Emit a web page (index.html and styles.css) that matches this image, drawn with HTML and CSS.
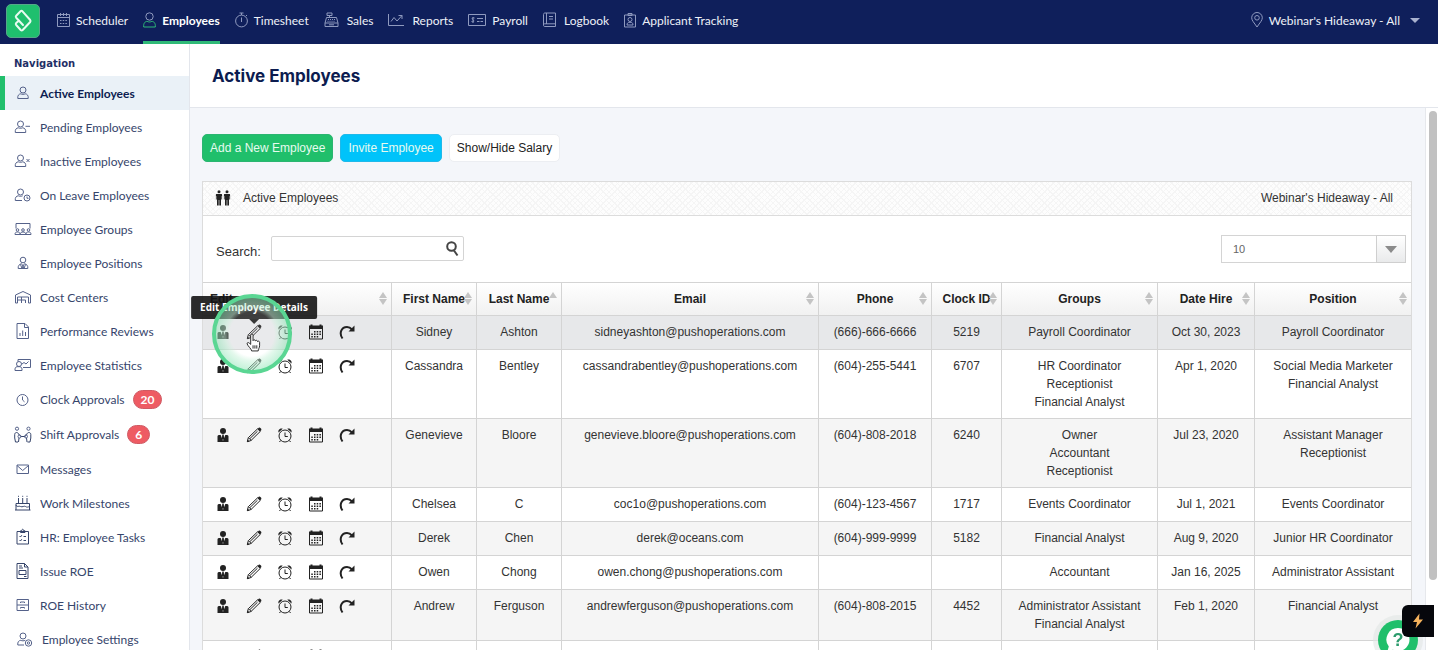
FILE: index.html
```
<!DOCTYPE html>
<html lang="en">
<head>
<meta charset="utf-8">
<title>Active Employees</title>
<link rel="stylesheet" href="styles.css">
</head>
<body>

<!-- shared icons -->
<svg class="sprite">
  <symbol id="i-user" viewBox="0 0 16 16"><circle cx="8" cy="4" r="3"/><path d="M2.500 15V9.500c0-1 .7-1.500 2-1.500h1.200L8 14 10.300 8h1.200c1.300 0 2 .5 2 1.500V15z"/><path d="M7.300 7.500h1.400l.5 4L8 13.500l-1.200-2z"/></symbol>
  <symbol id="i-pencil" viewBox="0 0 16 16"><path class="l" d="M1.300 14.700l1-4L11.600 1.800l2.700 2.600-9.300 9.100zM4 11.500l7.500-7.300M2.500 10.700l2.600 2.600"/><path d="M11.500 2l1.300-1.200c1-.8 3.300 1.300 2.400 2.500L14 4.600zM1 15l.6-2.500 1.900 1.900z"/></symbol>
  <symbol id="i-alarm" viewBox="0 0 16 16"><circle class="l" cx="8" cy="9" r="6"/><path class="l" d="M8 5.500V9.500h2.800M3.500 13.500L2.500 15M12.500 13.500l1 1.500"/><path d="M1.500 5.500c-.8-2.500 1.500-4.500 4.200-3.800zM14.500 5.500c.8-2.500-1.500-4.500-4.200-3.800z"/></symbol>
  <symbol id="i-cal" viewBox="0 0 16 16"><path class="l" d="M1.500 2.500h13v12.500h-13z"/><path d="M1 1.500h1.500V.5h2v1h7v-1h2v1H15V5H1z"/><path d="M6 7h1.500v1.500H6zM8.700 7h1.500v1.500H8.700zM11.400 7h1.500v1.500h-1.500zM3.300 9.500h1.500V11H3.300zM6 9.500h1.500V11H6zM8.700 9.500h1.500V11H8.700zM11.400 9.500h1.500V11h-1.500zM3.300 12h1.500v1.500H3.300zM6 12h1.500v1.500H6zM8.700 12h1.500v1.500H8.700z"/></symbol>
  <symbol id="i-redo" viewBox="0 0 16 16"><path class="k" d="M3.500 14.500C-.3 9 2.500 3 8 3c2.300 0 3.500.8 5 2.500"/><path d="M15.500 1.500v6h-6z"/></symbol>
  <symbol id="sort" viewBox="0 0 8 13"><path d="M4 0l4 6H0zM0 7h8l-4 6z"/></symbol>
  <symbol id="sort-up" viewBox="0 0 8 13"><path d="M4 0l4 6H0z"/></symbol>
</svg>

<header class="topbar">
  <a class="logo" href="#" aria-label="Home">
    <svg viewBox="1 1 32 32"><path d="M17 21L10.200 13.700c-.6-.7-.6-1.300 0-2L14.500 7.300c.7-.7 1.300-.7 2 0l7.700 8.700c.5.700.5 1.300 0 2l-7.500 8c-.7.700-1.300.7-2 0l-4.500-5c-.6-.7-.6-1.300 0-2l2.800-2.500"/></svg>
  </a>
  <nav class="topnav">
    <a href="#"><svg width="13" height="16" viewBox="0 0 13 16"><path d="M.5 2.500h12v12H.5zM.5 5.500h12M3.500 1v3M6.500 1v3M9.500 1v3"/><path d="M3 8.500h7M3 11.500h7" stroke-dasharray="1.500 1.200"/></svg><span>Scheduler</span></a>
    <a href="#" class="current"><svg width="13" height="16" viewBox="0 0 13 16"><circle cx="6.500" cy="4.500" r="3.700"/><path class="green" d="M.7 15h11.600c.4-4-1.500-5.500-3.400-5.700-1.500.9-3.300.9-4.800 0C2.200 9.500.3 11 .7 15z"/></svg><span>Employees</span></a>
    <a href="#"><svg width="13" height="16" viewBox="0 0 13 16"><circle cx="6.500" cy="9" r="5.900"/><path d="M6.500 3V1M4.500 1h4M6.500 5.500V10M11 4l1-1"/></svg><span>Timesheet</span></a>
    <a href="#" class="wide"><svg width="15" height="16" viewBox="0 0 15 16"><path d="M1 11h13v3.500H1zM1 11l1.500-5.500h10L14 11M3 1h5v2.500H3zM5.500 3.500v2M5 12.800h5"/><path d="M4 7.500h7.500M3.500 9.300h8" stroke-dasharray="1 1"/></svg><span>Sales</span></a>
    <a href="#" class="wide"><svg width="16" height="16" viewBox="0 0 16 16"><path d="M.5 2v11.500H16M3 9.500l3-4 3 3.500L14 3.500M10.500 3.500H14V7"/></svg><span>Reports</span></a>
    <a href="#"><svg width="18" height="16" viewBox="0 0 18 16"><path d="M.5 2.500h17v11H.5zM9 6.500h6M9 9.500h2.500M12.500 9.500H15M6.500 6c-2.500-1-3 1-1.500 1.800s1 2.700-1.500 1.700M5 5v6"/></svg><span>Payroll</span></a>
    <a href="#" class="wide"><svg width="13" height="16" viewBox="0 0 13 16"><path d="M2 1h10.500v13.500H2C.8 14.500.5 14 .5 13V2.500C.5 1.500 1 1 2 1zM3.500 1v11M.5 13c0-1 .5-1.200 1.500-1.200h10.500M6 4.500h4M6 7h4"/></svg><span>Logbook</span></a>
    <a href="#"><svg width="12" height="16" viewBox="0 0 12 16"><path d="M.5 3h11v12H.5zM4 3V1.500h4V3.500H4zM3 13h6c0-2-1-2.700-3-2.700S3 11 3 13z"/><circle cx="6" cy="7.500" r="2"/></svg><span>Applicant Tracking</span></a>
  </nav>
  <button class="location" type="button">
    <svg width="12" height="16" viewBox="0 0 12 16"><path d="M6 15C3 10.500.7 8.500.7 5.800a5.300 5.300 0 0 1 10.600 0C11.300 8.500 9 10.500 6 15z"/><circle cx="6" cy="5.800" r="2.300"/></svg>
    <span>Webinar's Hideaway - All</span>
    <i class="caret"></i>
  </button>
</header>

<div class="layout">
  <aside class="sidebar">
    <h2>Navigation</h2>
    <ul>
      <li class="active"><a href="#"><svg viewBox="0 0 18 18"><circle cx="9" cy="6" r="3"/><path d="M3.800 14.500h10.400c.4-3-1-4.500-3-4.700-1.300.7-3 .7-4.400 0-2 .2-3.400 1.700-3 4.700z"/></svg>Active Employees</a></li>
      <li><a href="#"><svg viewBox="0 0 18 18"><circle cx="6.500" cy="6" r="3"/><path d="M1.300 14.500h10.400c.4-3-1-4.500-3-4.700-1.300.7-3 .7-4.400 0-2 .2-3.400 1.700-3 4.700zM11.500 8.300H16"/></svg>Pending Employees</a></li>
      <li><a href="#"><svg viewBox="0 0 18 18"><circle cx="6.500" cy="6" r="3"/><path d="M1.300 14.500h10.400c.4-3-1-4.500-3-4.700-1.300.7-3 .7-4.400 0-2 .2-3.400 1.700-3 4.700zM12.500 7l3 3M15.500 7l-3 3"/></svg>Inactive Employees</a></li>
      <li><a href="#"><svg viewBox="0 0 18 18"><circle cx="6.500" cy="6" r="3"/><path d="M8 14.500H1.300c-.4-3 1-4.500 3-4.700 1.300.7 3 .7 4.400 0M13 10.500v1.800h1.500"/><circle cx="13" cy="12" r="3"/></svg>On Leave Employees</a></li>
      <li><a href="#"><svg viewBox="0 0 18 18"><path d="M2 8.500V3.500h14v5"/><circle cx="3.500" cy="10" r="1.300"/><circle cx="9" cy="10" r="1.300"/><circle cx="14.500" cy="10" r="1.300"/><path d="M1 14.500c0-2 1-2.500 2.500-2.500s2.600.5 2.600 2.500c0-2 1.300-2.500 2.900-2.500s2.900.5 2.900 2.500c0-2 1-2.500 2.600-2.500s2.500.5 2.500 2.500z"/></svg>Employee Groups</a></li>
      <li><a href="#"><svg viewBox="0 0 18 18"><circle cx="9" cy="6" r="2.800"/><path d="M4.200 14.500c-.3-3 1-4 3.300-4.800L9 12l1.500-2.300c2.300.8 3.600 1.800 3.300 4.800zM9 12l-1 2.500M9 12l1 2.500M6.500 10.500l1.500 4M11.500 10.500l-1.500 4"/></svg>Employee Positions</a></li>
      <li><a href="#"><svg viewBox="0 0 18 18"><path d="M1.500 15V7L9 3.500 16.500 7v8h-2V9h-11v6zM3.500 12h8M7.500 9v6M11.500 12v3"/></svg>Cost Centers</a></li>
      <li><a href="#"><svg viewBox="0 0 18 18"><path d="M3 1.500h8l3.500 3.500v11.500H3zM10.500 1.500v4h4M6 14v-3M8.700 14V8.500M11.500 14v-4"/></svg>Performance Reviews</a></li>
      <li><a href="#"><svg viewBox="0 0 18 18"><circle cx="5" cy="8" r="2.500"/><path d="M1 14.500h7c.3-2.500-.7-3.500-2-3.800H3C1.500 11 .8 12 1 14.500zM4 5.500v-2h12.500v8H9M8 8l2-1.500L12 8l2.500-2.500"/></svg>Employee Statistics</a></li>
      <li><a href="#"><svg viewBox="0 0 18 18"><circle cx="8.500" cy="9" r="5.500"/><path d="M8.500 5.500V9l2 1.800"/></svg>Clock Approvals<b class="badge">20</b></a></li>
      <li><a href="#"><svg viewBox="0 0 18 18"><circle cx="3" cy="2.700" r="1.600"/><circle cx="14.500" cy="2.700" r="1.600"/><path class="thick" d="M4 16H1.500l-.8-4V8.500c0-2.500 3.500-2.800 4 0l1.800 1M5 12l-.5 4M13.500 16H16l.8-4V8.500c0-2.500-3.500-2.800-4 0l-1.800 1M12.500 12l.5 4M6.500 10.500h5"/><circle cx="5.500" cy="10.500" r="1.500"/><circle cx="12" cy="10.500" r="1.500"/></svg>Shift Approvals<b class="badge">6</b></a></li>
      <li><a href="#"><svg viewBox="0 0 18 18"><path d="M3 5h11.500v8.500H3zM3 5.500l5.700 5 5.800-5"/></svg>Messages</a></li>
      <li><a href="#"><svg viewBox="0 0 18 18"><path class="thick" d="M2 16v-4.500c2 2 2.500 0 4.500 1s3.500-1 5 0 2.500.5 4 0M2 12V9.500h13.500V16M1 16h15.500M4.500 9V4M8.700 9V4M13 9V4M4.500 2.800v-1M8.700 2.800v-1M13 2.800v-1"/></svg>Work Milestones</a></li>
      <li><a href="#"><svg viewBox="0 0 18 18"><path class="thick" d="M3 3.500h11.500v12.500H3zM6.500 4V2.800h1.200c0-2 2-2 2 0H11V4.500H6.500zM5.500 8l1 1 1.300-1.800M9.500 8.500h2.500M5.500 12l1 1 1.300-1.800M9.500 12.500h2.500"/></svg>HR: Employee Tasks</a></li>
      <li><a href="#"><svg viewBox="0 0 18 18"><path class="thick" d="M3 1.500h7.500L14 5v11.500H3zM10.500 1.500V5H14M5 4h3M5 6h4M5 8.500h7v4H5zM10 14.500h2.500"/></svg>Issue ROE</a></li>
      <li><a href="#"><svg viewBox="0 0 18 18"><path d="M3 3.500h11.500v11H3zM3 9h11.500M6.500 7V6h4v1M6.500 12.500v-1h4v1"/></svg>ROE History</a></li>
      <li class="settings"><a href="#"><svg viewBox="0 0 18 18"><circle cx="7" cy="6" r="3"/><path d="M8 15H1.800c-.4-3 1-4.500 3-4.700 1.300.7 3 .7 4.400 0"/><circle cx="12.500" cy="13" r="3.200"/><circle cx="12.500" cy="13" r="1.200"/></svg>Employee Settings</a></li>
    </ul>
  </aside>

  <div class="main">
    <div class="title"><h1>Active Employees</h1></div>

    <div class="scroll">
      <main class="content">
        <div class="buttons">
          <button type="button" class="btn green">Add a New Employee</button>
          <button type="button" class="btn blue">Invite Employee</button>
          <button type="button" class="btn white">Show/Hide Salary</button>
        </div>

        <section class="panel">
          <div class="panel-head">
            <svg width="16" height="16" viewBox="0 0 16 16"><circle cx="4" cy="1.800" r="1.500"/><circle cx="12" cy="1.800" r="1.500"/><path d="M1.700 4h4.600c.6 0 .8.400.8 1v4.500H6.300V6H6v9.500H4.300V10h-.6v5.500H2V6h-.3v3.500H.9V5c0-.6.2-1 .8-1zM9.700 4h4.600c.6 0 .8.400.8 1v4.500h-.8V6H14v9.500h-1.700V10h-.6v5.500H10V6h-.3v3.500h-.8V5c0-.6.2-1 .8-1z"/></svg>
            <span>Active Employees</span>
            <span class="where">Webinar's Hideaway - All</span>
          </div>

          <div class="filters">
            <label for="search">Search:</label>
            <div class="searchbox">
              <input id="search" type="text">
              <svg width="13" height="16" viewBox="0 0 13 16"><circle cx="5.500" cy="5.500" r="4.300"/><path d="M8 9.500l3.500 5"/></svg>
            </div>
            <div class="pagesize">
              <select aria-label="Rows per page"><option>10</option><option>25</option><option>50</option></select>
              <span class="arrow"><i class="caret"></i></span>
            </div>
          </div>

          <table>
            <colgroup>
              <col class="c-edit"><col class="c-name"><col class="c-name"><col><col class="c-phone"><col class="c-clock"><col class="c-group"><col class="c-date"><col class="c-group">
            </colgroup>
            <thead>
              <tr>
                <th class="edit">Edit<svg class="sort"><use href="#sort"/></svg></th>
                <th>First Name<svg class="sort"><use href="#sort"/></svg></th>
                <th>Last Name<svg class="sort"><use href="#sort-up"/></svg></th>
                <th>Email<svg class="sort"><use href="#sort"/></svg></th>
                <th>Phone<svg class="sort"><use href="#sort"/></svg></th>
                <th>Clock ID<svg class="sort"><use href="#sort"/></svg></th>
                <th>Groups<svg class="sort"><use href="#sort"/></svg></th>
                <th>Date Hire<svg class="sort"><use href="#sort"/></svg></th>
                <th>Position<svg class="sort"><use href="#sort"/></svg></th>
              </tr>
            </thead>
            <tbody>
              <tr class="hover">
                <td><div class="tools"><a href="#"><svg><use href="#i-user"/></svg></a><a href="#" class="tipped"><svg><use href="#i-pencil"/></svg><span class="tip">Edit Employee Details</span><span class="ring"></span><svg class="hand" viewBox="0 0 16 20"><path d="M5 12V2.500c0-2 2.500-2 2.500 0V8c.5-1.500 2.500-1 2.500.3.5-1 2.300-.8 2.300.7.6-.8 2.200-.5 2.200 1v3.500c0 2.500-1.500 3-1.500 5.500H6c0-2-4-5-4.800-7.500-.3-1.500 1.300-2 2.300-.8zM7.500 13v3.500M9.500 13v3.500M11.500 13v3.500"/></svg></a><a href="#"><svg><use href="#i-alarm"/></svg></a><a href="#"><svg><use href="#i-cal"/></svg></a><a href="#"><svg><use href="#i-redo"/></svg></a></div></td>
                <td>Sidney</td><td>Ashton</td><td>sidneyashton@pushoperations.com</td><td>(666)-666-6666</td><td>5219</td><td>Payroll Coordinator</td><td>Oct 30, 2023</td><td>Payroll Coordinator</td>
              </tr>
              <tr>
                <td><div class="tools"><a href="#"><svg><use href="#i-user"/></svg></a><a href="#"><svg><use href="#i-pencil"/></svg></a><a href="#"><svg><use href="#i-alarm"/></svg></a><a href="#"><svg><use href="#i-cal"/></svg></a><a href="#"><svg><use href="#i-redo"/></svg></a></div></td>
                <td>Cassandra</td><td>Bentley</td><td>cassandrabentley@pushoperations.com</td><td>(604)-255-5441</td><td>6707</td><td>HR Coordinator<br>Receptionist<br>Financial Analyst</td><td>Apr 1, 2020</td><td>Social Media Marketer<br>Financial Analyst</td>
              </tr>
              <tr>
                <td><div class="tools"><a href="#"><svg><use href="#i-user"/></svg></a><a href="#"><svg><use href="#i-pencil"/></svg></a><a href="#"><svg><use href="#i-alarm"/></svg></a><a href="#"><svg><use href="#i-cal"/></svg></a><a href="#"><svg><use href="#i-redo"/></svg></a></div></td>
                <td>Genevieve</td><td>Bloore</td><td>genevieve.bloore@pushoperations.com</td><td>(604)-808-2018</td><td>6240</td><td>Owner<br>Accountant<br>Receptionist</td><td>Jul 23, 2020</td><td>Assistant Manager<br>Receptionist</td>
              </tr>
              <tr>
                <td><div class="tools"><a href="#"><svg><use href="#i-user"/></svg></a><a href="#"><svg><use href="#i-pencil"/></svg></a><a href="#"><svg><use href="#i-alarm"/></svg></a><a href="#"><svg><use href="#i-cal"/></svg></a><a href="#"><svg><use href="#i-redo"/></svg></a></div></td>
                <td>Chelsea</td><td>C</td><td>coc1o@pushoperations.com</td><td>(604)-123-4567</td><td>1717</td><td>Events Coordinator</td><td>Jul 1, 2021</td><td>Events Coordinator</td>
              </tr>
              <tr>
                <td><div class="tools"><a href="#"><svg><use href="#i-user"/></svg></a><a href="#"><svg><use href="#i-pencil"/></svg></a><a href="#"><svg><use href="#i-alarm"/></svg></a><a href="#"><svg><use href="#i-cal"/></svg></a><a href="#"><svg><use href="#i-redo"/></svg></a></div></td>
                <td>Derek</td><td>Chen</td><td>derek@oceans.com</td><td>(604)-999-9999</td><td>5182</td><td>Financial Analyst</td><td>Aug 9, 2020</td><td>Junior HR Coordinator</td>
              </tr>
              <tr>
                <td><div class="tools"><a href="#"><svg><use href="#i-user"/></svg></a><a href="#"><svg><use href="#i-pencil"/></svg></a><a href="#"><svg><use href="#i-alarm"/></svg></a><a href="#"><svg><use href="#i-cal"/></svg></a><a href="#"><svg><use href="#i-redo"/></svg></a></div></td>
                <td>Owen</td><td>Chong</td><td>owen.chong@pushoperations.com</td><td></td><td></td><td>Accountant</td><td>Jan 16, 2025</td><td>Administrator Assistant</td>
              </tr>
              <tr>
                <td><div class="tools"><a href="#"><svg><use href="#i-user"/></svg></a><a href="#"><svg><use href="#i-pencil"/></svg></a><a href="#"><svg><use href="#i-alarm"/></svg></a><a href="#"><svg><use href="#i-cal"/></svg></a><a href="#"><svg><use href="#i-redo"/></svg></a></div></td>
                <td>Andrew</td><td>Ferguson</td><td>andrewferguson@pushoperations.com</td><td>(604)-808-2015</td><td>4452</td><td>Administrator Assistant<br>Financial Analyst</td><td>Feb 1, 2020</td><td>Financial Analyst</td>
              </tr>
              <tr>
                <td><div class="tools"><a href="#"><svg><use href="#i-user"/></svg></a><a href="#"><svg><use href="#i-pencil"/></svg></a><a href="#"><svg><use href="#i-alarm"/></svg></a><a href="#"><svg><use href="#i-cal"/></svg></a><a href="#"><svg><use href="#i-redo"/></svg></a></div></td>
                <td></td><td></td><td></td><td></td><td></td><td></td><td></td><td></td>
              </tr>
            </tbody>
          </table>
        </section>
      </main>
      <div class="track"><div class="thumb"></div></div>
    </div>
  </div>
</div>

<button class="help" type="button" aria-label="Help">
  <svg viewBox="0 0 26 26"><path d="M13 1a11.500 11.500 0 0 1 0 23c-2 0-3.500-.4-5-1.200L2.500 24l1.300-4.500A11.500 11.500 0 0 1 13 1z"/></svg>
  <b>?</b>
</button>
<button class="bolt" type="button" aria-label="Quick actions">
  <svg width="12" height="16" viewBox="0 0 12 16"><path d="M7.500.5L1 9h4l-1.500 6.500L11 6.500H7z"/></svg>
</button>

</body>
</html>
```
FILE: styles.css
```
* {
  box-sizing: border-box;
}

body {
  margin: 0;
  height: 100vh;
  overflow: hidden;
  display: flex;
  flex-direction: column;
  font-family: "Liberation Sans", Arial, sans-serif;
  font-size: 12px;
  color: #333;
}

a {
  color: inherit;
  text-decoration: none;
}

button, input, select {
  font: inherit;
  color: inherit;
}

svg {
  display: block;
  flex: none;
}

.sprite {
  position: absolute;
  width: 0;
  height: 0;
}

/* top bar */
.topbar {
  display: flex;
  flex: none;
  height: 44px;
  padding: 0 18px 0 6px;
  background: #0f1f5b;
  color: #eef1f8;
  font-family: Lato, sans-serif;
  font-size: 12px;
}

.logo {
  width: 34px;
  height: 34px;
  margin: 4px 17px 0 0;
  border: 1px solid #55a889;
  border-radius: 5px;
  background: #1fbf6e;
}

.logo svg {
  width: 32px;
  height: 32px;
  fill: none;
  stroke: #e8fbf1;
  stroke-width: 2;
  stroke-linejoin: round;
  stroke-linecap: round;
}

.topnav {
  display: flex;
  gap: 15px;
}

.topnav a {
  display: flex;
  align-items: center;
  gap: 6px;
  border-bottom: 3px solid transparent;
}

.topnav a.wide {
  gap: 8px;
}

.topnav svg, .location svg {
  fill: none;
  stroke: #8f9abf;
  margin-bottom: 2px;
}

.topnav a.current {
  color: white;
  font-weight: bold;
  border-color: #2fba78;
}

.topnav .green {
  stroke: #2fba78;
}

.location {
  display: flex;
  align-items: center;
  gap: 6px;
  height: 41px;
  margin-left: auto;
  padding: 0;
  border: 0;
  background: none;
}

.caret {
  width: 0;
  border: 5px solid transparent;
  border-top-color: #a9b2cf;
  border-bottom: 0;
}

.location .caret {
  margin-left: 4px;
}

/* sidebar */
.layout {
  display: flex;
  flex: 1;
  min-height: 0;
}

.sidebar {
  flex: none;
  width: 190px;
  border-right: 1px solid #e3e6ec;
  overflow: hidden;
  font-family: Lato, sans-serif;
  font-size: 12px;
  color: #36456b;
}

.sidebar h2 {
  margin: 0;
  padding: 8px 14px 0;
  height: 32px;
  line-height: 24px;
  font-family: "DejaVu Sans", sans-serif;
  font-size: 10px;
  color: #1f2f66;
}

.sidebar ul {
  list-style-type: none;
  margin: 0;
  padding: 0;
}

.sidebar a {
  display: flex;
  align-items: center;
  gap: 8px;
  min-height: 34px;
  padding-left: 14px;
}

.sidebar li.active a {
  padding-left: 9px;
  border-left: 5px solid #21bf6c;
  background: #eaf1f7;
  color: #0c1c50;
  font-weight: bold;
}

.sidebar li.settings a {
  padding-left: 16px;
}

.sidebar svg {
  width: 18px;
  height: 18px;
  fill: none;
  stroke: #55628a;
}

.sidebar svg .thick {
  stroke: #36456b;
}

.badge {
  margin: 8px 0;
  padding: 0 7px;
  border: 1px solid #cf5a63;
  border-radius: 10px;
  background: #ee5b63;
  color: white;
  line-height: 17px;
}

/* page */
.main {
  display: flex;
  flex-direction: column;
  flex: 1;
  min-width: 0;
}

.title {
  flex: none;
  height: 64px;
  padding: 0 22px;
  border-bottom: 1px solid #e3e6ec;
}

.title h1 {
  margin: 0;
  line-height: 64px;
  font-family: Inter, sans-serif;
  font-size: 17px;
  color: #0c1c50;
}

.scroll {
  display: flex;
  flex: 1;
  min-height: 0;
  background: #f4f6fa;
}

.content {
  flex: 1;
  min-width: 0;
  padding: 26px 13px 0 12px;
}

.track {
  flex: none;
  width: 13px;
  padding: 3px 1px 0 3px;
  border-left: 1px solid #e6e8ec;
  background: white;
}

.thumb {
  height: 87%;
  border-radius: 4px;
  background: #c1c1c1;
}

.buttons {
  display: flex;
  gap: 7px;
  margin-bottom: 19px;
}

.btn {
  height: 28px;
  padding: 0 7px;
  border: 1px solid #2bb571;
  border-radius: 5px;
  background: #20bf6b;
  color: #e6fbef;
}

.btn.blue {
  border-color: #1fb9ea;
  background: #00c3fa;
}

.btn.white {
  border-color: #eceef2;
  background: white;
  color: #222;
}

.panel {
  border: 1px solid #dcdcdc;
  background: white;
}

.panel-head {
  display: flex;
  align-items: center;
  gap: 12px;
  height: 34px;
  padding: 0 18px 2px 12px;
  border-bottom: 1px solid #dcdcdc;
  background-color: #fdfdfd;
  background-image:
    repeating-linear-gradient(45deg, transparent 0 3px, #f5f5f5 3px 4px),
    repeating-linear-gradient(-45deg, transparent 0 3px, #f5f5f5 3px 4px);
}

.panel-head svg {
  fill: #222;
}

.panel-head .where {
  margin-left: auto;
}

.filters {
  display: flex;
  align-items: center;
  gap: 10px;
  height: 66px;
  padding: 0 5px 0 13px;
}

.filters label {
  padding-top: 4px;
  font-size: 13px;
}

.searchbox {
  position: relative;
  width: 193px;
  padding-bottom: 2px;
}

.searchbox input {
  display: block;
  width: 100%;
  height: 25px;
  padding: 0 24px 0 8px;
  border: 1px solid #d4d4d4;
  border-radius: 2px;
}

.searchbox svg {
  position: absolute;
  top: 5px;
  right: 5px;
  fill: none;
  stroke: #444;
  stroke-width: 2;
}

.pagesize {
  position: relative;
  width: 185px;
  margin-left: auto;
}

.pagesize select {
  display: block;
  width: 100%;
  height: 28px;
  padding: 0 40px 0 11px;
  border: 1px solid #d4d4d4;
  border-radius: 0;
  appearance: none;
  background: white;
  color: #666;
  font-size: 11px;
}

.pagesize .arrow {
  position: absolute;
  top: 0;
  right: 0;
  display: flex;
  align-items: center;
  justify-content: center;
  width: 30px;
  height: 28px;
  border: 1px solid #cfcfcf;
  background: linear-gradient(#fff, #e9eaeb);
  pointer-events: none;
}

.pagesize .caret {
  border-width: 7px 6px 0;
  border-top-color: #8b8b8b;
}

/* table */
table {
  width: 100%;
  table-layout: fixed;
  border-collapse: separate;
  border-spacing: 0;
}

.c-edit { width: 189px; }
.c-name { width: 85px; }
.c-phone { width: 113px; }
.c-clock { width: 70px; }
.c-group { width: 156px; }
.c-date { width: 97px; }

th, td {
  border-top: 1px solid #d4d4d4;
  border-right: 1px solid #d4d4d4;
  text-align: center;
}

th:last-child, td:last-child {
  border-right: 0;
}

th {
  position: relative;
  height: 33px;
  padding: 0;
  background: linear-gradient(#fff, #f1f1f1);
  color: #222;
}

th.edit {
  padding-left: 7px;
  text-align: left;
}

.sort {
  position: absolute;
  top: 9px;
  right: 4px;
  width: 8px;
  height: 13px;
  fill: #c4c4c4;
}

td {
  padding: 7px 4px;
  line-height: 18px;
  vertical-align: top;
}

td:first-child {
  padding-left: 12px;
}

tbody tr:nth-child(odd) td {
  background: #f5f5f5;
}

tbody tr.hover td {
  background: #e7e8ea;
}

.tools {
  display: flex;
  gap: 15px;
  height: 19px;
  padding-top: 1px;
}

.tools svg {
  width: 16px;
  height: 16px;
  fill: #222;
}

symbol .l {
  fill: none;
  stroke: #222;
}

symbol .k {
  fill: none;
  stroke: #222;
  stroke-width: 2;
}

/* tooltip and pointer over the pencil */
.tipped {
  position: relative;
}

.tip {
  position: absolute;
  bottom: 23px;
  left: 50%;
  transform: translateX(-50%);
  padding: 0 9px;
  border-radius: 2px;
  background: rgba(20, 20, 20, 0.9);
  color: white;
  font-family: "Open Sans", sans-serif;
  font-size: 10px;
  font-weight: bold;
  line-height: 23px;
  white-space: nowrap;
}

.tip::after {
  content: "";
  position: absolute;
  top: 100%;
  left: 50%;
  margin-left: -5px;
  border: 5px solid transparent;
  border-top-color: #222;
  border-bottom: 0;
}

.ring {
  position: absolute;
  top: -30px;
  left: -34px;
  width: 80px;
  height: 80px;
  border: 4px solid #5ad693;
  border-radius: 50%;
  background: radial-gradient(circle, rgba(255, 255, 255, 0.1) 22px, rgba(200, 242, 218, 0.5) 27px, rgba(140, 228, 180, 0.5) 36px);
}

.tools .hand {
  position: absolute;
  top: 9px;
  left: 0;
  width: 15px;
  height: 19px;
  fill: white;
  stroke: #222;
}

/* floating buttons */
.help {
  position: fixed;
  right: 20px;
  bottom: -10px;
  display: grid;
  place-items: center;
  width: 40px;
  height: 40px;
  padding: 0;
  border: 0;
  border-radius: 50%;
  background: #20bf6b;
  box-shadow: 0 0 0 5px rgba(225, 230, 228, 0.6);
}

.help svg, .help b {
  grid-area: 1 / 1;
}

.help svg {
  width: 26px;
  height: 26px;
  fill: white;
}

.help b {
  color: #2c9b6c;
  font-size: 18px;
}

.bolt {
  position: fixed;
  right: 4px;
  bottom: 13px;
  display: grid;
  place-items: center;
  width: 32px;
  height: 32px;
  padding: 0;
  border: 0;
  border-radius: 6px 0 0 6px;
  background: #06070c;
}

.bolt svg {
  fill: #f5b25c;
}
```
